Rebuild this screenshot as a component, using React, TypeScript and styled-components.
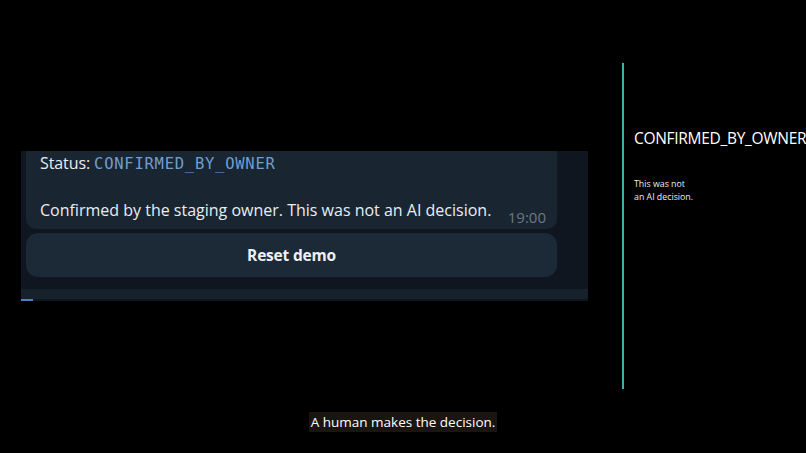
import React from 'react';
import styled, { createGlobalStyle } from 'styled-components';

const GlobalStyle = createGlobalStyle`
  html, body {
    margin: 0;
    padding: 0;
    background: #000;
  }
  body {
    font-family: "Open Sans", "Noto Sans", sans-serif;
    -webkit-font-smoothing: antialiased;
  }
`;

const Stage = styled.div`
  width: 806px;
  height: 453px;
  background: #000;
  overflow: hidden;
  display: flex;
  flex-direction: column;
`;

const Main = styled.div`
  display: flex;
  padding-top: 63px;
  height: 326px;
`;

const Left = styled.div`
  width: 622px;
  flex-shrink: 0;
  padding: 88px 0 0 21px;
  box-sizing: border-box;
`;

const Shot = styled.div`
  width: 567px;
  height: 150px;
  background: #0f1620;
  display: flex;
  flex-direction: column;
  padding-left: 5px;
  box-sizing: border-box;
  position: relative;
  font-family: "Open Sans", "Noto Sans", sans-serif;
`;

const Bubble = styled.div`
  width: 531px;
  height: 78px;
  background: #1a2532;
  border-radius: 0 0 10px 10px;
  box-sizing: border-box;
  padding: 1px 11px 0 14px;
  display: flex;
  flex-direction: column;
`;

const StatusLine = styled.div`
  color: #e9edf1;
  font-size: 16px;
  line-height: 22px;
  letter-spacing: -0.1px;
`;

const Code = styled.span`
  font-family: "DejaVu Sans Mono", monospace;
  font-size: 15.5px;
  color: #6d9fcf;
  letter-spacing: 0.75px;
`;

const MsgRow = styled.div`
  display: flex;
  align-items: flex-end;
  justify-content: space-between;
  margin-top: 24px;
`;

const Msg = styled.div`
  color: #e9edf1;
  font-size: 16px;
  line-height: 22px;
`;

const Time = styled.span`
  color: #6c7884;
  font-size: 15px;
  line-height: 18px;
  margin-bottom: -5px;
`;

const ResetButton = styled.div`
  width: 531px;
  height: 44px;
  margin-top: 4px;
  background: #1c2937;
  border-radius: 12px;
  display: flex;
  align-items: center;
  justify-content: center;
  color: #eef1f4;
  font-weight: 700;
  font-size: 15.5px;
  letter-spacing: -0.2px;
`;

const BottomStrip = styled.div`
  margin: 12px 0 0 -5px;
  height: 10px;
  background: #17212b;
`;

const Tab = styled.div`
  position: absolute;
  left: 0;
  bottom: 0;
  width: 12px;
  height: 2px;
  background: #4b80c4;
`;

const Aside = styled.div`
  border-left: 2px solid #42aea6;
  height: 326px;
  box-sizing: border-box;
  padding: 65px 0 0 10px;
  color: #fff;
  font-family: "Open Sans", "Noto Sans", sans-serif;
  white-space: nowrap;
`;

const AsideTitle = styled.div`
  font-size: 15.5px;
  line-height: 21px;
  letter-spacing: -0.3px;
`;

const AsideNote = styled.div`
  margin-top: 29px;
  font-size: 8.8px;
  line-height: 13px;
  color: #eeeeee;
`;

const CaptionRow = styled.div`
  display: flex;
  justify-content: center;
  margin-top: 23px;
`;

const Caption = styled.div`
  background: #1b1511;
  color: #fff;
  font-size: 13.5px;
  line-height: 20px;
  padding: 0 2px;
  font-family: "Open Sans", "Noto Sans", sans-serif;
`;

export default function App() {
  return (
    <Stage>
      <GlobalStyle />
      <Main>
        <Left>
          <Shot>
            <Bubble>
              <StatusLine>
                Status: <Code>CONFIRMED_BY_OWNER</Code>
              </StatusLine>
              <MsgRow>
                <Msg>Confirmed by the staging owner. This was not an AI decision.</Msg>
                <Time>19:00</Time>
              </MsgRow>
            </Bubble>
            <ResetButton>Reset demo</ResetButton>
            <BottomStrip />
            <Tab />
          </Shot>
        </Left>
        <Aside>
          <AsideTitle>CONFIRMED_BY_OWNER</AsideTitle>
          <AsideNote>
            This was not
            <br />
            an AI decision.
          </AsideNote>
        </Aside>
      </Main>
      <CaptionRow>
        <Caption>A human makes the decision.</Caption>
      </CaptionRow>
    </Stage>
  );
}
